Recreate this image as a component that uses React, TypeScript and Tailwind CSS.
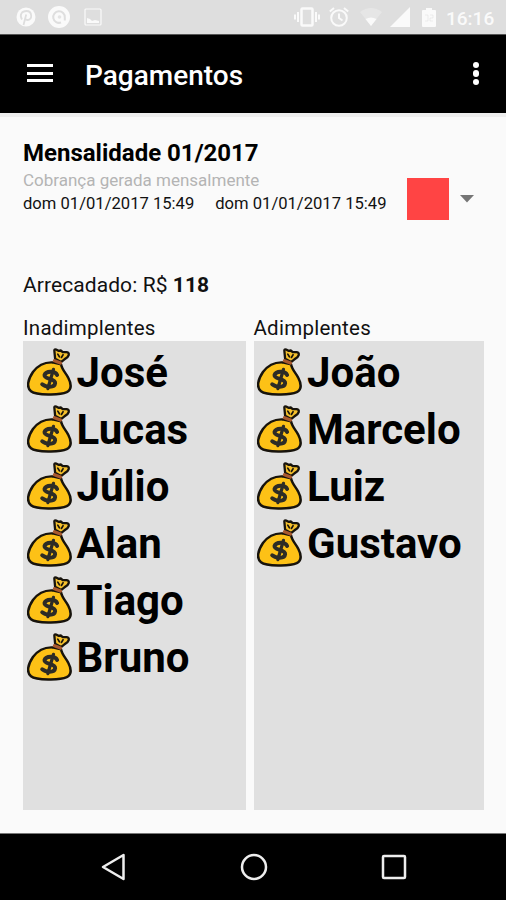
import { useId } from 'react'

const late = ['José', 'Lucas', 'Júlio', 'Alan', 'Tiago', 'Bruno']
const paid = ['João', 'Marcelo', 'Luiz', 'Gustavo']

function MoneyBag() {
  return (
    <svg viewBox="18 22 136 147" className="h-[49px] w-[45px] shrink-0" fill="none" stroke="#17130c" strokeLinecap="round" strokeLinejoin="round">
      <path d="M103 57 L101 36 Q99 27 106 29 L113 33 L120 32 L126 37 L138 37 Q146 39 144 46 Q142 53 132 58 L121 67 Z" fill="#f5c02c" strokeWidth="7" />
      <path d="M111 43 L116 51 M127 45 L122 53" strokeWidth="5" />
      <path d="M95 68 C72 67 51 77 36 97 C21 119 15 143 30 155 C45 167 118 168 138 158 C155 149 151 130 142 113 C134 99 123 88 121 74 Z" fill="#fdc116" strokeWidth="7.500" />
      <path d="M101 63 L119 70" stroke="#a8592f" strokeWidth="10" />
      <path d="M109 106 C104 94 76 92 71 106 C68 119 105 117 103 131 C101 146 75 143 64 134" stroke="#2d2c26" strokeWidth="12" />
      <path d="M98 89 L81 147" stroke="#2d2c26" strokeWidth="10" />
    </svg>
  )
}

function StatusBar() {
  const cut = useId()
  return (
    <header className="flex h-[34px] items-center bg-[#dedede] pr-[11px] pl-4 text-[#fafafa]">
      <svg viewBox="0 0 20 20" className="h-5 w-5" fill="none">
        <circle cx="10" cy="10" r="9.5" fill="currentColor" />
        <path d="M6 12.500C3 7.500 6 4 10.500 4c6 0 6 9 1.500 9-1.700 0-2.500-1-2.500-1.500M10.200 7.500 7.500 18" stroke="#dedede" strokeWidth="1.800" />
      </svg>
      <svg viewBox="0 0 22 22" className="ml-3 h-[22px] w-[22px]" fill="none">
        <circle cx="11" cy="11" r="11" fill="currentColor" />
        <path d="M13 16.500A5.800 5.800 0 1 1 16.800 11.500V14.500" stroke="#dedede" strokeWidth="2" />
        <circle cx="11.500" cy="11" r="1.800" fill="#e4e4e4" />
      </svg>
      <svg viewBox="0 0 18 18" className="ml-[14px] h-[18px] w-[18px]" fill="none">
        <rect x="1" y="1" width="16" height="16" rx="1" stroke="currentColor" strokeWidth="1.200" />
        <path d="M3 15V10l3 1 2 2 3-1 4 1V15Z" fill="currentColor" />
      </svg>

      <svg viewBox="0 0 26 20" className="ml-auto h-5 w-[26px]" fill="none" stroke="currentColor" strokeWidth="2">
        <rect x="7.500" y="1.500" width="11" height="17" rx="1" strokeWidth="2.500" />
        <path d="M4 5v10M1 7.500v5M22 5v10M25 7.500v5" />
      </svg>
      <svg viewBox="0 0 20 20" className="ml-[9px] h-5 w-5" fill="none" stroke="currentColor" strokeWidth="2">
        <circle cx="10" cy="11" r="7.800" />
        <path d="M10 6.500V11l3.500 2.500M.8 4.500 5 1M19.200 4.500 15 1" />
      </svg>
      <svg viewBox="0 0 22 20" className="ml-[11px] h-5 w-[22px]">
        <path d="M0 5Q11-3 22 5L11 19Z" fill="#e6e6e6" />
        <path d="M5.500 12Q11 9 16.500 12L11 19Z" fill="currentColor" />
      </svg>
      <svg viewBox="0 0 20 20" className="ml-2 h-5 w-5">
        <path d="M0 20 20 0V20Z" fill="currentColor" />
      </svg>
      <svg viewBox="0 0 14 19" className="ml-3 h-[19px] w-[14px]">
        <mask id={cut}>
          <path d="M0 0H14V19H0Z" fill="white" />
          <path d="M3 7h3v6H3M8 7h3v3H8v3h3" fill="none" stroke="black" strokeWidth="1" opacity=".5" />
        </mask>
        <path d="M4 0h6v2h3q1 0 1 1v15q0 1-1 1H1q-1 0-1-1V3q0-1 1-1h3Z" fill="currentColor" mask={`url(#${cut})`} />
      </svg>
      <span className="mt-[3px] ml-[10px] w-[49px] text-[19px] leading-5 font-medium whitespace-nowrap">16:16</span>
    </header>
  )
}

function MemberList({ title, names, width }: { title: string; names: string[]; width: string }) {
  return (
    <section className={`flex flex-col ${width}`}>
      <h2 className="h-6 text-[20.5px] leading-[22px] tracking-[0.25px]">{title}</h2>
      <ul className="h-[469px] bg-[#e0e0e0] pl-[3.5px]">
        {names.map((name) => (
          <li key={name} className="flex h-[57px] items-center gap-[5px] pt-[4px]">
            <MoneyBag />
            <span className="mt-[2px] text-[42px] leading-[50px] font-bold text-black">{name}</span>
          </li>
        ))}
      </ul>
    </section>
  )
}

export default function App() {
  return (
    <div className="flex h-[900px] w-[506px] flex-col overflow-hidden bg-[#fafafa] font-['Roboto',sans-serif] text-[#111]">
      <StatusBar />

      <nav className="flex h-[79px] items-center border-t border-[#555] bg-black pr-[27px] pl-[27px] text-white">
        <div className="mb-[2px] flex w-[26px] flex-col gap-[4.5px]">
          <span className="h-[3px] bg-white" />
          <span className="h-[3px] bg-white" />
          <span className="h-[3px] bg-white" />
        </div>
        <h1 className="mt-[3px] ml-8 text-[28px] leading-8 font-medium">Pagamentos</h1>
        <div className="mb-[1px] ml-auto flex flex-col gap-[2px]">
          <span className="h-[6.5px] w-[6.5px] rounded-full bg-white" />
          <span className="h-[6.5px] w-[6.5px] rounded-full bg-white" />
          <span className="h-[6.5px] w-[6.5px] rounded-full bg-white" />
        </div>
      </nav>

      <main className="h-[720px] border-t-4 border-[#eeeeee] pr-[22px] pl-[23px]">
        <div className="flex h-[151px] pt-[22px]">
          <div className="w-[384px] shrink-0">
            <h2 className="text-[24px] leading-7 font-bold text-black">Mensalidade 01/2017</h2>
            <p className="h-[27px] pt-[3px] text-[17px] leading-5 text-[#b4b4b4]">Cobrança gerada mensalmente</p>
            <div className="flex gap-[21px] text-[16.6px] leading-5 whitespace-nowrap">
              <span>dom 01/01/2017 15:49</span>
              <span>dom 01/01/2017 15:49</span>
            </div>
          </div>
          <div className="mt-[39px] flex h-[42px] items-center">
            <span className="h-[42px] w-[42px] bg-[#ff4444]" />
            <svg viewBox="0 0 14 8" className="ml-[11px] h-2 w-[14px]">
              <path d="M0 0H14L7 7.500Z" fill="#757575" />
            </svg>
          </div>
        </div>

        <p className="mt-[5px] h-6 text-[21px] leading-6 tracking-[0.08px]">
          Arrecadado: R$ <b>118</b>
        </p>

        <div className="mt-[20px] flex gap-[7.500px]">
          <MemberList title="Inadimplentes" names={late} width="w-[223px]" />
          <MemberList title="Adimplentes" names={paid} width="w-[230.500px]" />
        </div>
      </main>

      <footer className="flex h-[67px] items-center justify-between border-t border-[#777] bg-black pr-[99px] pl-[101px]">
        <svg viewBox="0 0 26 28" className="h-7 w-[26px]" fill="none" stroke="#eee" strokeWidth="2.500" strokeLinejoin="round">
          <path d="M22.500 2V26L2 14Z" />
        </svg>
        <svg viewBox="0 0 28 28" className="h-7 w-7" fill="none" stroke="#eee" strokeWidth="2.500">
          <circle cx="14" cy="14" r="12" />
        </svg>
        <svg viewBox="0 0 26 26" className="h-[26px] w-[26px]" fill="none" stroke="#eee" strokeWidth="2.500">
          <rect x="2" y="2" width="22" height="22" rx="1" />
        </svg>
      </footer>
    </div>
  )
}
